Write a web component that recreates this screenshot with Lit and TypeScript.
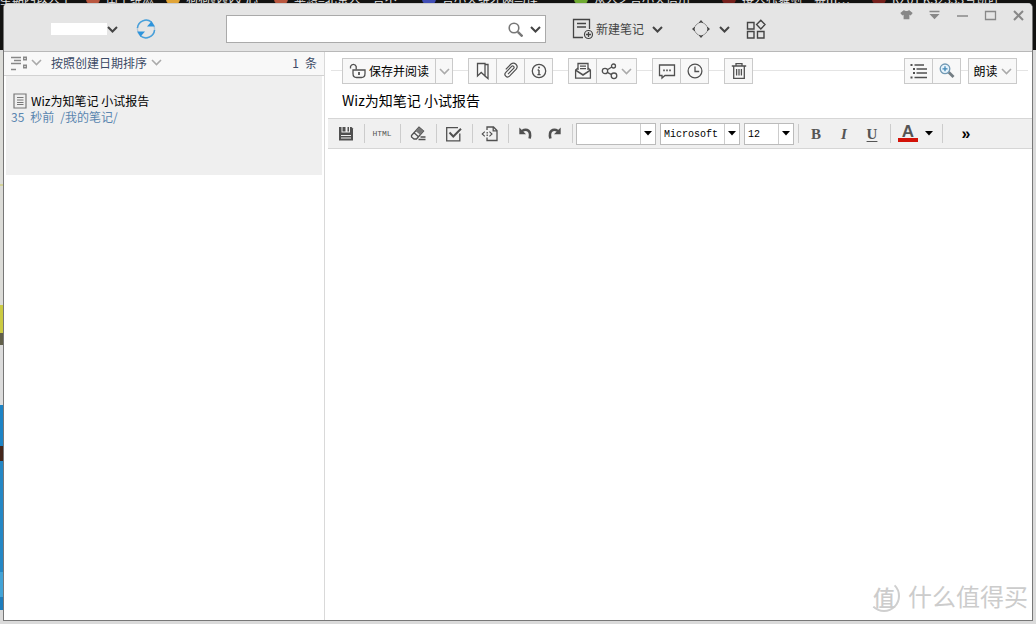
import { LitElement, html, css, svg } from "lit";
import { customElement, state } from "lit/decorators.js";

const chevron = (sw = 2) => html`<svg class="chev" width="11" height="7" viewBox="0 0 11 7" aria-hidden="true">
  <path d="M1 1L5.5 5.5L10 1" fill="none" stroke="currentColor" stroke-width=${sw} /></svg>`;

const icon = (content: unknown, size = 18) => html`<svg class="icon" width=${size} height=${size} viewBox="0 0 ${size} ${size}"
  fill="none" stroke="currentColor" stroke-width="1.3" aria-hidden="true">${content}</svg>`;

const icons = {
  sync: svg`<circle cx="10" cy="10" r="8.6" stroke="#b4c8d8" stroke-width="1.4"/>
    <path d="M1.4 9A8.8 8.8 0 0 1 15.5 3" stroke="#459fdb" stroke-width="1.5"/>
    <path d="M18.6 11A8.8 8.8 0 0 1 4.5 17" stroke="#459fdb" stroke-width="1.5"/>
    <path d="M11 7.5L15.6 2.2L18.8 7.5Z" fill="#2d94dc" stroke="none"/>
    <path d="M1.2 12.5H9L4.4 17.8Z" fill="#2d94dc" stroke="none"/>`,
  search: svg`<circle cx="6" cy="6" r="4.8" stroke-width="1.6"/><path d="M9.8 9.8L14.5 14.5" stroke-width="2.4"/>`,
  newNote: svg`<path d="M17.5 11V1.5H1.5V19.5H11"/><path d="M5 5.5H14M5 9H14"/>
    <circle cx="16.5" cy="16.5" r="4" stroke-width="1.2"/><path d="M14 16.5H19M16.5 14V19"/>`,
  move: svg`<path d="M4.2 7L7 4.2M13 4.2L15.8 7M15.8 13L13 15.8M7 15.8L4.2 13" stroke-width="1" stroke="#888"/>
    <g fill="currentColor" stroke="none"><path d="M7 4.4L10 1L13 4.4L10 3.6Z"/><path d="M7 15.6L10 19L13 15.6L10 16.4Z"/>
    <path d="M4.4 7L1 10L4.4 13L3.6 10Z"/><path d="M15.6 7L19 10L15.6 13L16.4 10Z"/></g>`,
  apps: svg`<path d="M1.5 3.5H8V10H1.5ZM1.5 12.5H8V19H1.5ZM11.5 12.5H18V19H11.5ZM14.8 1.2L19 5.6L14.8 10L10.6 5.6Z" stroke-width="1.4"/>`,
  shirt: svg`<path d="M4 1L0.3 4L2.3 6.6L3.6 5.8V10.3H9.4V5.8L10.7 6.6L12.7 4L9 1C8 2.4 5 2.4 4 1Z" fill="currentColor" stroke="none"/>`,
  tray: svg`<path d="M1.5 2.5H11.5" stroke-width="1.6"/><path d="M1.5 5H11.5L6.5 10.3Z" fill="currentColor" stroke="none"/>`,
  minimize: svg`<path d="M1 7H12" stroke-width="1.7"/>`,
  maximize: svg`<path d="M1.5 2.5H11.5V10.5H1.5Z"/>`,
  close: svg`<path d="M2 2L11 11M11 2L2 11" stroke-width="2"/>`,
  listView: svg`<path d="M0 3.5H10M0 9.5H10M0 15.5H5M3 6.5H10" stroke-width="1.4"/><path d="M12.7 3.2H15.3V5.8H12.7ZM12.7 11.2H15.3V13.8H12.7Z" stroke-width="1.4"/>`,
  note: svg`<path d="M1 1H13V15H1Z"/><path d="M4 4.5H10.5M4 7H10.5M4 9.5H10.5M4 11.5H10.5" stroke-width="1"/>`,
  lock: svg`<path d="M1.5 6.5V4.5A3 3 0 0 1 7.2 4.5V7.5"/><path d="M4 8H16V11.5C16 14 14.5 15.5 12.5 15.5H7.5C5.5 15.5 4 14 4 11.5Z"/><path d="M10 10V13" stroke-width="1.8"/>`,
  bookmark: svg`<path d="M3.5 1.5H11V14L7.2 10.5L3.5 14Z"/><path d="M11 2.5H14V16.5L11 14"/>`,
  clip: svg`<path d="M6 12.2L11.6 6.4A1.4 1.4 0 0 0 9.6 4.4L3.8 10.3A2.6 2.6 0 0 0 7.5 14.1L14.2 7.2A3.7 3.7 0 0 0 9 2L3.8 7.3" stroke-width="1.2"/>`,
  info: svg`<circle cx="9" cy="9" r="6.7"/><path d="M9 8V12.6M7.6 8H9M7.4 12.6H10.6" stroke-width="1.4"/><circle cx="9" cy="5.5" r="1" fill="currentColor" stroke="none"/>`,
  mail: svg`<path d="M4 8V1.5H14V8M6 4.2H12M6 6.7H12"/><path d="M4 6L1.6 8V16.2H16.4V8L14 6"/><path d="M1.6 8.2L9 13L16.4 8.2" stroke-width="1.6"/>`,
  share: svg`<circle cx="4" cy="9" r="2.7"/><circle cx="12.5" cy="4" r="2"/><circle cx="13" cy="13.8" r="2.8"/><path d="M6.4 7.7L10.8 5M6.3 10.4L10.6 12.6"/>`,
  comment: svg`<path d="M1.5 3H16.5V13.5H7L4 16V13.5H1.5Z"/><path d="M5.2 8.3H12.8" stroke-width="1.8" stroke-dasharray="1.6 1.4"/>`,
  clock: svg`<circle cx="9" cy="9" r="6.9"/><path d="M9 4.5V9.5H13.2"/>`,
  trash: svg`<path d="M1.8 4H16.2M6 3.8V1.6H12V3.8M3.7 4V16.3H14.3V4"/><path d="M6.6 7V13.5M9 7V13.5M11.4 7V13.5"/>`,
  outline: svg`<path d="M4.5 3H14M6.5 7H17M6.5 11H17M4.5 15.5H17" stroke-width="1.3"/><path d="M0.5 3H2.5M3 7H5M3 11H5M0.5 15.5H2.5" stroke-width="1.8"/>`,
  zoom: svg`<path d="M10.5 10L15.5 15" stroke="#737d83" stroke-width="2.8"/><circle cx="7" cy="6.8" r="4.8" fill="#e6f3fc" stroke="#739ab4"/><path d="M4.5 6.8H9.5M7 4.3V9.3" stroke="#4088b7"/>`,
  save: svg`<path d="M2 2H14.5L16 3.5V15.5H2Z" fill="currentColor" stroke="none"/><path d="M4.5 1.5H13V7.5H4.5Z" fill="#f0f0f0" stroke="none"/><path d="M5.5 2H8.5V6.5H5.5ZM10.5 2H12V6.5H10.5Z" fill="currentColor" stroke="none"/><path d="M4 10.5H14M4 13H14" stroke="#f0f0f0" stroke-width="1.2"/>`,
  eraser: svg`<path d="M2.5 10.5L10 2.2L14.5 6L7.5 14H5L2.5 12Z"/><path d="M5 7.7L9.5 11.7"/><path d="M6.5 6L10 2.2L14.5 6L11.2 9.8Z" fill="#777" stroke="none"/><path d="M11.5 12H16.5M9.5 14.5H16.5"/>`,
  check: svg`<path d="M14.8 8.5V15.8H1.7V2.7H13"/><path d="M4.5 7.5L8.3 11.5L16 3.8" stroke-width="2"/>`,
  insert: svg`<path d="M6 5V2H12.5L16 5.5V15.5H6V12.5"/><path d="M12.2 2V5.8H16" /><path d="M6.2 7V11" stroke-dasharray="1.5 1"/><path d="M3.8 6.6L1.2 9L3.8 11.4M8.4 6.6L11 9L8.4 11.4" stroke-width="1.1"/>`,
  undo: svg`<path d="M5 6C10 3 14.6 6 12.6 13.5" stroke-width="2.6"/><path d="M2.3 2.5V9.3H9Z" fill="currentColor" stroke="none"/>`,
  redo: svg`<path d="M13 6C8 3 3.4 6 5.4 13.5" stroke-width="2.6"/><path d="M15.7 2.5V9.3H9Z" fill="currentColor" stroke="none"/>`,
};

const tabs = [
  "星期四以人工", "南土维滋", "狗狗贱贱史心", "苹想=北京人一言不…", "言小天维才网马怪…",
  "从人之言小天信川…", "接人独舞剑三赛m…", "RZ01 KS2333亏班旺…",
];

@customElement("wiz-backdrop")
export class WizBackdrop extends LitElement {
  static styles = css`
    :host {
      position: absolute; inset: 0; overflow: hidden; z-index: 0; background: #dadada;
      font: 12px/12px "Noto Sans CJK SC", sans-serif;
    }
    .dark { position: absolute; inset: 0 0 auto 0; height: 50px; background: #121211; }
    .tabs { position: absolute; top: -7px; left: 0; right: 0; display: grid;
      grid-template-columns: 86px 80px 108px 148px 152px 148px 150px 1fr; color: #e2e2e2; white-space: nowrap; }
    .tab { display: flex; gap: 6px; }
    .fav { width: 14px; height: 12px; border-radius: 6px; flex: none; background: #b9573f; }
    .tab:nth-child(3) .fav { background: #e0a437; }
    .tab:nth-child(5) .fav { background: #404db5; }
    .tab:nth-child(6) .fav { background: #6fab32; }
    .tab:nth-child(7) .fav, .tab:nth-child(8) .fav { background: #75201c; }
    .left { position: absolute; top: 52px; left: 0; bottom: 0; width: 4px;
      background: linear-gradient(#dcdcd8 0 132px, #d3d39a 132px 134px, #dcdcd8 134px 253px, #cccb42 253px 281px,
        #62604a 281px 293px, #dcdcdc 293px 353px, #1d84c6 353px 394px, #44261b 394px 409px, #2487c5 409px 520px,
        #42a3d7 520px 545px, #1d7dbd 545px 558px, #dadada 558px); }
  `;
  render() {
    return html`<div class="dark"></div><div class="left"></div>
      <div class="tabs">${tabs.map((t, i) => html`<div class="tab">${i ? html`<span class="fav"></span>` : ""}<span>${t}</span></div>`)}</div>`;
  }
}

@customElement("wiz-header")
export class WizHeader extends LitElement {
  static styles = css`
    :host { display: flex; align-items: center; height: 47px; background: #e5e5e5; border-bottom: 1px solid #b8b8b8; color: #444; }
    button { border: 0; background: none; padding: 0; margin: 0; color: inherit; font: inherit; display: flex; align-items: center; justify-content: center; }
    svg { display: block; flex: none; }
    .user { margin: 3px 0 0 47px; height: 20px; }
    .name { width: 56px; height: 12px; background: #fff; }
    .sync { margin: 3px 0 0 18px; }
    .search { display: flex; align-items: center; box-sizing: border-box; width: 320px; height: 28px; margin: 3px 0 0 70px;
      background: #fff; border: 1px solid #aaa; }
    .search input { flex: 1; min-width: 0; border: 0; outline: 0; padding: 0 8px; background: none; font: 12px "Noto Sans CJK SC", sans-serif; }
    .search button { height: 26px; width: 20px; }
    .search .find { color: #777; }
    .actions { display: flex; align-items: center; margin: 3px 0 0 26px; font: 12px/20px "Noto Sans CJK SC", sans-serif; }
    .new { gap: 2px; }
    .dd { margin-left: 8px; }
    .move { margin-left: 28px; }
    .apps { margin-left: 16px; }
    .win { margin-left: auto; align-self: flex-start; display: flex; color: #888; }
    .win button { width: 28px; height: 22px; }
  `;
  render() {
    return html`
      <button class="user" aria-label="账户"><span class="name"></span>${chevron()}</button>
      <button class="sync" aria-label="同步">${icon(icons.sync, 20)}</button>
      <div class="search" role="search">
        <input type="text" aria-label="搜索" />
        <button class="find" aria-label="查找">${icon(icons.search, 15)}</button>
        <button aria-label="搜索选项">${chevron()}</button>
      </div>
      <div class="actions">
        <button class="new">${icon(icons.newNote, 22)}<span>新建笔记</span></button>
        <button class="dd" aria-label="新建选项">${chevron()}</button>
        <button class="move" aria-label="移动">${icon(icons.move, 20)}</button>
        <button class="dd" aria-label="移动选项">${chevron()}</button>
        <button class="apps" aria-label="应用">${icon(icons.apps, 20)}</button>
      </div>
      <div class="win">
        <button aria-label="皮肤">${icon(icons.shirt, 13)}</button>
        <button aria-label="菜单">${icon(icons.tray, 13)}</button>
        <button aria-label="最小化">${icon(icons.minimize, 13)}</button>
        <button aria-label="最大化">${icon(icons.maximize, 13)}</button>
        <button aria-label="关闭">${icon(icons.close, 13)}</button>
      </div>`;
  }
}

@customElement("wiz-note-list")
export class WizNoteList extends LitElement {
  static styles = css`
    :host { display: block; border-right: 1px solid #d9d9d9; background: #fff; font: 12px/16px "Noto Sans CJK SC", sans-serif; }
    button { border: 0; background: none; padding: 0; margin: 0; color: inherit; font: inherit; display: flex; align-items: center; }
    svg { display: block; flex: none; }
    .bar { display: flex; align-items: center; box-sizing: border-box; height: 24px; padding: 0 7px 2px; background: #f8f8f8; border-bottom: 1px solid #d2d2d2; color: #3c4a66; }
    .view { color: #888; gap: 3px; }
    .chev { color: #aaa; }
    .sort { margin-left: 9px; gap: 4px; }
    .count { margin-left: auto; display: flex; gap: 6px; }
    .item { display: block; margin: 0 2px; padding: 17px 5px 0; height: 82px; background: #efefef; color: #000; text-decoration: none; }
    .head { display: flex; align-items: center; gap: 4px; padding-left: 2px; }
    .head svg { color: #777; }
    .meta { color: #5a86b0; display: flex; gap: 6px; }
  `;
  render() {
    return html`
      <div class="bar">
        <button class="view" aria-label="视图">${icon(icons.listView, 17)}${chevron(1.6)}</button>
        <button class="sort"><span>按照创建日期排序</span>${chevron(1.6)}</button>
        <span class="count"><span>1</span><span>条</span></span>
      </div>
      <a class="item" href="#note">
        <div class="head">
          <svg width="14" height="16" viewBox="0 0 14 16" fill="none" stroke="currentColor" stroke-width="1.2">${icons.note}</svg>
          <span>Wiz为知笔记 小试报告</span>
        </div>
        <div class="meta"><span>35</span><span>秒前</span><span>/我的笔记/</span></div>
      </a>`;
  }
}

@customElement("wiz-editor")
export class WizEditor extends LitElement {
  @state() heading = "Wiz为知笔记 小试报告";
  static styles = css`
    :host { display: flex; flex-direction: column; min-width: 0; background: #fff; font: 12px/16px "Noto Sans CJK SC", sans-serif; color: #000; }
    button { border: 0; background: none; padding: 0; margin: 0; color: inherit; font: inherit; display: flex; align-items: center; justify-content: center; }
    svg { display: block; flex: none; }
    .icon { color: #505050; }
    .chev { color: #aaa; }
    .actions { display: flex; gap: 16px; margin: 6px 4px 0 6px; padding: 0 12px 0 11px;
      background: linear-gradient(#e4e4e4, #e4e4e4) 0 12px / 100% 1px no-repeat; }
    .group { display: flex; box-sizing: border-box; height: 26px; border: 1px solid #cacaca; border-left: 0; margin-right: -1px; background: #f8f8f8; }
    .group button { box-sizing: border-box; width: 28px; border-left: 1px solid #cacaca; }
    .group .keep { width: 93px; gap: 2px; }
    .group .more { width: 17px; }
    .group .wide { width: 40px; gap: 2px; }
    .group .read { width: 48px; gap: 3px; }
    .group.right { margin-left: auto; }
    .group.tail { margin-left: -8px; }
    .title { border: 0; outline: 0; padding: 0; margin: 5px 14px 7px 17px; height: 22px; font: 14px/22px "Noto Sans CJK SC", sans-serif; color: #000; background: none; }
    .tools { display: flex; align-items: center; height: 29px; margin-left: 3px; padding-left: 4px; background: #f0f0f0;
      border-top: 1px solid #d6d6d6; border-bottom: 1px solid #d6d6d6; }
    .tools button { width: 28px; height: 28px; color: #555; flex: none; }
    .sep { width: 1px; height: 19px; margin: 0 3px 0 4px; background: #ccc; flex: none; }
    .html { font: 8px/12px "Liberation Mono", monospace; }
    .combo { position: relative; display: block; width: 80px; height: 22px; box-sizing: border-box; border: 1px solid #bbb; background: #fff; }
    .combo + .combo { margin-left: 4px; }
    .combo.size { width: 50px; }
    .combo select { appearance: none; width: 100%; height: 100%; border: 0; border-radius: 0; outline: 0; padding: 0 16px 0 3px; background: none;
      font: 10px "Liberation Mono", monospace; color: #000; }
    .tri { position: absolute; right: 0; top: 0; bottom: 0; width: 14px; border-left: 1px solid #ccc; display: grid; place-items: center; pointer-events: none; }
    .tools .face { font: bold 15px/20px "Liberation Serif", serif; }
    .tools .it { font-style: italic; }
    .un { text-decoration: underline; text-underline-offset: 2px; }
    .color { font: bold 17px/13px "Liberation Sans", sans-serif; border-bottom: 4px solid #d31208; padding: 0 4px; }
    .tools .arrow { width: 14px; color: #000; margin-right: 2px; }
    .tools .over { color: #000; margin-left: 6px; font: bold 16px/20px "Liberation Sans", sans-serif; }
    .page { flex: 1; }
  `;
  private tri = html`<svg width="8" height="5" viewBox="0 0 8 5" aria-hidden="true"><path d="M0 0H8L4 4.5Z" fill="#000" /></svg>`;
  private tool(label: string, content: unknown) {
    return html`<button aria-label=${label}>${icon(content)}</button>`;
  }
  private combo(label: string, value: string, cls = "") {
    return html`<label class="combo ${cls}"><select aria-label=${label}><option>${value}</option></select><span class="tri">${this.tri}</span></label>`;
  }
  render() {
    const sep = html`<span class="sep"></span>`;
    return html`
      <div class="actions">
        <div class="group">
          <button class="keep">${icon(icons.lock)}<span>保存并阅读</span></button>
          <button class="more" aria-label="保存选项">${chevron(1.6)}</button>
        </div>
        <div class="group">${this.tool("标签", icons.bookmark)}${this.tool("附件", icons.clip)}${this.tool("信息", icons.info)}</div>
        <div class="group">${this.tool("邮件", icons.mail)}
          <button class="wide" aria-label="分享">${icon(icons.share)}${chevron(1.6)}</button></div>
        <div class="group">${this.tool("评论", icons.comment)}${this.tool("历史", icons.clock)}</div>
        <div class="group">${this.tool("删除", icons.trash)}</div>
        <div class="group right">${this.tool("大纲", icons.outline)}${this.tool("缩放", icons.zoom)}</div>
        <div class="group tail"><button class="read"><span>朗读</span>${chevron(1.6)}</button></div>
      </div>
      <input class="title" type="text" aria-label="标题" .value=${this.heading} />
      <div class="tools" role="toolbar">
        ${this.tool("保存", icons.save)}${sep}
        <button class="html">HTML</button>${sep}
        ${this.tool("清除格式", icons.eraser)}${sep}
        ${this.tool("待办", icons.check)}${sep}
        ${this.tool("插入", icons.insert)}${sep}
        ${this.tool("撤销", icons.undo)}${this.tool("重做", icons.redo)}${sep}
        ${this.combo("样式", "")}${this.combo("字体", "Microsoft")}${this.combo("字号", "12", "size")}${sep}
        <button class="face">B</button><button class="face it">I</button><button class="face un">U</button>${sep}
        <button aria-label="文字颜色"><span class="color">A</span></button><button class="arrow" aria-label="选择颜色">${this.tri}</button>${sep}
        <button class="over">»</button>
      </div>
      <div class="page"></div>`;
  }
}

@customElement("app-root")
export class AppRoot extends LitElement {
  static styles = css`
    :host { display: flex; position: relative; box-sizing: border-box; min-height: 100vh; padding: 3px; }
    .window { position: relative; z-index: 1; flex: 1; min-width: 0; display: flex; flex-direction: column; background: #fff;
      border: 1px solid #777; border-top-color: #ccc; border-radius: 5px 5px 0 0; overflow: hidden; }
    .main { flex: 1; display: grid; grid-template-columns: 321px minmax(0, 1fr); }
    .mark { position: absolute; right: 4px; bottom: 8px; display: flex; align-items: center; gap: 8px; color: #ccc;
      font: 24px/32px "Noto Sans CJK SC", sans-serif; }
    .seal { width: 32px; height: 32px; box-sizing: border-box; border: 2px solid transparent; border-right-color: #cfcfcf; border-bottom-color: #cfcfcf;
      border-radius: 50%; display: grid; place-items: center; font-size: 22px; line-height: 26px; font-weight: 500; }
  `;
  render() {
    return html`<wiz-backdrop></wiz-backdrop>
      <div class="window">
        <wiz-header></wiz-header>
        <div class="main"><wiz-note-list></wiz-note-list><wiz-editor></wiz-editor></div>
        <div class="mark"><span class="seal">值</span><span>什么值得买</span></div>
      </div>`;
  }
}
